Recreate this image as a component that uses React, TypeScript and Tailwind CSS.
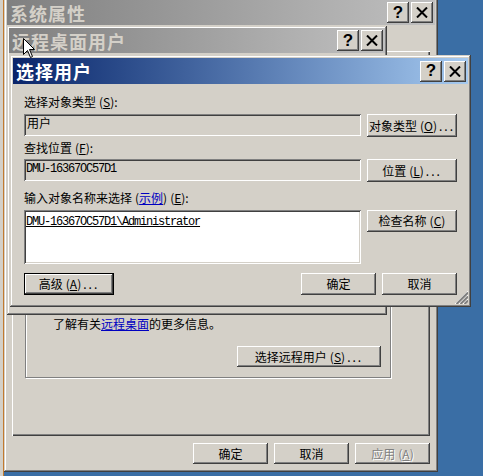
import React from "react";

const raised =
  "shadow-[inset_-1px_-1px_#404040,inset_1px_1px_#ffffff,inset_-2px_-2px_#808080,inset_2px_2px_#d4d0c8]";
const frame =
  "shadow-[inset_-1px_-1px_#404040,inset_1px_1px_#d4d0c8,inset_-2px_-2px_#808080,inset_2px_2px_#ffffff]";
const sunken =
  "shadow-[inset_1px_1px_#808080,inset_-1px_-1px_#ffffff,inset_2px_2px_#404040,inset_-2px_-2px_#d4d0c8]";

const Key = ({ k }: { k: string }) => (
  <span className="ml-[3px]">
    (<span className="underline">{k}</span>)
  </span>
);

const Dots = () => <span className="ml-[2px] tracking-[2px]">...</span>;

function Btn({
  children,
  className = "",
  isDefault = false,
  disabled = false,
}: {
  children: React.ReactNode;
  className?: string;
  isDefault?: boolean;
  disabled?: boolean;
}) {
  return (
    <div className={`${isDefault ? "border border-black" : ""} ${className}`}>
      <div
        className={`w-full h-full flex items-center justify-center bg-[#d4d0c8] ${raised} ${
          disabled ? "text-[#808080] [text-shadow:1px_1px_0_#ffffff]" : "text-black"
        }`}
      >
        {children}
      </div>
    </div>
  );
}

function CaptionButtons() {
  return (
    <div className="flex gap-[2px]">
      <div
        className={`w-[22px] h-[21px] bg-[#d4d0c8] ${raised} flex items-center justify-center pb-[1px] text-[17px] font-bold leading-none text-black font-['Liberation_Sans',sans-serif]`}
      >
        ?
      </div>
      <div className={`w-[22px] h-[21px] bg-[#d4d0c8] ${raised} flex items-center justify-center`}>
        <svg width="12" height="11" viewBox="0 0 12 11">
          <path d="M1 0.5 L11 10.5 M11 0.5 L1 10.5" stroke="black" strokeWidth="2" fill="none" />
        </svg>
      </div>
    </div>
  );
}

function TitleBar({ title, active = false, h = "h-[25px]" }: { title: string; active?: boolean; h?: string }) {
  return (
    <div
      className={`${h} shrink-0 flex items-center justify-between pl-[3px] pr-[2px] ${
        active
          ? "bg-linear-to-r from-[#0a246a] to-[#a6caf0] text-white"
          : "bg-linear-to-r from-[#808080] to-[#c0c0c0] text-[#d4d0c8]"
      }`}
    >
      <span className="text-[18px] font-bold tracking-[1px] leading-none">{title}</span>
      <CaptionButtons />
    </div>
  );
}

export default function App() {
  return (
    <div className="relative w-[483px] h-[476px] overflow-hidden bg-[#3a6ea5] text-[12px] text-black font-['Noto_Sans_CJK_SC',sans-serif]">
      {/* edge of a window further back */}
      <div className="absolute left-0 top-0 w-[4px] h-full bg-[#d4d0c8] border-r border-[#c27a2e]" />

      {/* 系统属性 */}
      <div className={`absolute left-[4px] top-[-3px] w-[434px] h-[475px] bg-[#d4d0c8] ${frame} p-[3px] flex flex-col`}>
        <TitleBar title="系统属性" />
        <div className="mx-[5px] mt-[26px] h-[385px] shadow-[inset_1px_1px_#ffffff,inset_-1px_-1px_#404040,inset_-2px_-2px_#808080] flex flex-col justify-end pb-[58px] pl-[13px]">
          <div className="w-[366px] h-[130px] border border-[#808080] shadow-[inset_1px_1px_#ffffff,1px_1px_#ffffff] flex flex-col justify-end pl-[27px] pr-[9px] pb-[10px]">
            <p className="leading-[16px]">
              了解有关<span className="text-[#0000c0] underline">远程桌面</span>的更多信息。
            </p>
            <div className="mt-[14px] flex justify-end">
              <Btn className="w-[144px] h-[21px]">
                选择远程用户<Key k="S" />
                <Dots />
              </Btn>
            </div>
          </div>
        </div>
        <div className="mt-[7px] flex justify-end gap-[6px] pr-[5px]">
          <Btn className="w-[75px] h-[21px]">确定</Btn>
          <Btn className="w-[75px] h-[21px]">取消</Btn>
          <Btn className="w-[75px] h-[21px]" disabled>
            应用<Key k="A" />
          </Btn>
        </div>
      </div>

      {/* 远程桌面用户 */}
      <div className={`absolute left-[7px] top-[26px] w-[380px] h-[289px] bg-[#d4d0c8] ${frame} p-[2px]`}>
        <TitleBar title="远程桌面用户" />
      </div>

      {/* 选择用户 */}
      <div className={`absolute left-[10px] top-[55px] w-[461px] h-[252px] bg-[#d4d0c8] ${frame} p-[3px] flex flex-col`}>
        <TitleBar title="选择用户" active h="h-[26px]" />
        <div className="px-[11px] pt-[10px]">
          <div className="h-[16px] leading-[16px]">
            选择对象类型<Key k="S" />:
          </div>
          <div className="mt-[4px] flex items-start gap-[6px]">
            <div className={`w-[337px] h-[22px] ${sunken} pl-[3px] pt-[1px] leading-[16px]`}>用户</div>
            <Btn className="w-[90px] h-[23px]">
              对象类型<Key k="O" />
              <Dots />
            </Btn>
          </div>
          <div className="mt-[3px] h-[16px] leading-[16px]">
            查找位置<Key k="F" />:
          </div>
          <div className="mt-[3px] flex items-start gap-[6px]">
            <div
              className={`w-[337px] h-[22px] ${sunken} pl-[2px] pt-[3px] leading-[15px] text-[12px] tracking-[-1.2px] font-['Liberation_Mono',monospace]`}
            >
              DMU-16367OC57D1
            </div>
            <Btn className="w-[90px] h-[23px]">
              位置<Key k="L" />
              <Dots />
            </Btn>
          </div>
          <div className="mt-[8px] h-[16px] leading-[16px]">
            输入对象名称来选择<span className="ml-[3px]">(</span>
            <span className="text-[#0000c0] underline">示例</span>)<Key k="E" />:
          </div>
          <div className="mt-[4px] flex items-start gap-[6px]">
            <div
              className={`w-[337px] h-[54px] bg-white ${sunken} pl-[2px] pt-[5px] leading-[15px] text-[12px] tracking-[-1.2px] font-['Liberation_Mono',monospace]`}
            >
              <span className="underline">DMU-16367OC57D1\Administrator</span>
            </div>
            <Btn className="w-[90px] h-[22px]">
              检查名称<Key k="C" />
            </Btn>
          </div>
          <div className="mt-[9px] flex items-center">
            <Btn className="w-[90px] h-[22px]" isDefault>
              高级<Key k="A" />
              <Dots />
            </Btn>
            <div className="ml-auto flex gap-[6px]">
              <Btn className="w-[75px] h-[22px]">确定</Btn>
              <Btn className="w-[75px] h-[22px]">取消</Btn>
            </div>
          </div>
        </div>
        {/* size grip */}
        <svg className="absolute right-[3px] bottom-[3px]" width="14" height="14" viewBox="0 0 14 14">
          <path d="M14 1 L1 14 M14 5 L5 14 M14 9 L9 14" stroke="#ffffff" strokeWidth="1" />
          <path d="M14 2.5 L2.5 14 M14 6.5 L6.5 14 M14 10.5 L10.5 14" stroke="#808080" strokeWidth="2" />
        </svg>
      </div>

      {/* mouse pointer */}
      <svg className="absolute left-[23px] top-[38px]" width="13" height="21" viewBox="0 0 13 21">
        <path
          d="M0.5 0.5 L0.5 16.5 L4.5 12.5 L7.5 19.5 L9.5 18.5 L6.5 11.5 L11.5 11.5 Z"
          fill="#ffffff"
          stroke="#000000"
          strokeWidth="1"
        />
      </svg>
    </div>
  );
}
